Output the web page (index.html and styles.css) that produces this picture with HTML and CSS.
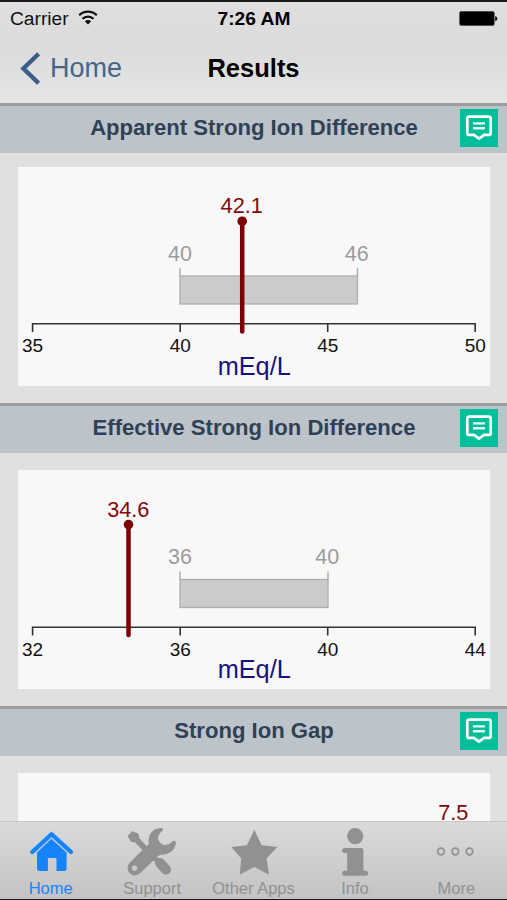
FILE: index.html
```
<!DOCTYPE html>
<html lang="en">
<head>
    <meta charset="UTF-8">
    <meta name="viewport" content="width=device-width, initial-scale=1.0">
    <title>Results</title>
    <link rel="stylesheet" href="styles.css">
</head>
<body>
    <!-- Comment icon shared by the section headers -->
    <svg class="defs" width="0" height="0">
        <symbol id="note" viewBox="0 0 38 38">
            <path d="M9.3 7.7h19.4a2 2 0 0 1 2 2v14.2a2 2 0 0 1-2 2h-4.6L19 29.6l-5.1-3.7H9.3a2 2 0 0 1-2-2V9.7a2 2 0 0 1 2-2z" fill="none" stroke="#fff" stroke-width="2.7" stroke-linejoin="round"/>
            <path d="M13 14.4h12M13 19.2h12" stroke="#e6faf5" stroke-width="2.4"/>
        </symbol>
    </svg>

    <div class="screen">
        <header class="topbar">
            <div class="status">
                <div class="carrier">
                    <span>Carrier</span>
                    <svg width="20" height="15" viewBox="0 0 20 15" fill="none" stroke="#111" stroke-width="2.3">
                        <path d="M1.2 5.2a12.5 12.5 0 0 1 17.6 0"/>
                        <path d="M4.5 8.8a7.8 7.8 0 0 1 11 0"/>
                        <path d="M6.9 11.4a4.4 4.4 0 0 1 6.2 0L10 14.4z" fill="#111" stroke="none"/>
                    </svg>
                </div>
                <div class="clock">7:26 AM</div>
                <div class="battery">
                    <svg width="39" height="15" viewBox="0 0 39 15">
                        <rect x="0.4" y="0.3" width="35" height="14.4" rx="2" fill="#000" stroke="#666" stroke-width="0.6"/>
                        <path d="M36.2 5q2.2.6 2.2 2.6t-2.2 2.6z" fill="#111"/>
                    </svg>
                </div>
            </div>
            <div class="nav">
                <a class="back" href="#">
                    <svg width="20" height="33" viewBox="0 0 20 33">
                        <path d="M18.6 1.8L3.4 16.5l15.2 14.7" fill="none" stroke="#3b5f88" stroke-width="4.4"/>
                    </svg>
                    <span>Home</span>
                </a>
                <h1>Results</h1>
            </div>
        </header>

        <main class="content">
            <section class="result first">
                <div class="result-title">
                    <h2>Apparent Strong Ion Difference</h2>
                    <button class="note"><svg width="38" height="38"><use href="#note"/></svg></button>
                </div>
                <svg class="chart" width="472" height="219" viewBox="0 0 472 219">
                    <rect class="range" x="162" y="109" width="177.5" height="28"/>
                    <path class="limit" d="M162 101v8M339.5 101v8"/>
                    <text class="limit-label" x="162" y="94">40</text>
                    <text class="limit-label" x="338.7" y="94">46</text>
                    <path class="axis" d="M14.6 165v-8.3h442.6v8.3M162.2 156.7v8.3M309.7 156.7v8.3"/>
                    <text class="tick" x="14.6" y="185.3">35</text>
                    <text class="tick" x="162.2" y="185.3">40</text>
                    <text class="tick" x="309.7" y="185.3">45</text>
                    <text class="tick" x="457.2" y="185.3">50</text>
                    <text class="unit" x="236.2" y="208">mEq/L</text>
                    <path class="stem" d="M224.2 54v110.5"/>
                    <circle class="dot" cx="224.2" cy="54.2" r="4.8"/>
                    <text class="value" x="223.7" y="46.3">42.1</text>
                </svg>
            </section>

            <section class="result">
                <div class="result-title">
                    <h2>Effective Strong Ion Difference</h2>
                    <button class="note"><svg width="38" height="38"><use href="#note"/></svg></button>
                </div>
                <svg class="chart" width="472" height="219" viewBox="0 0 472 219">
                    <rect class="range" x="162" y="109.5" width="148" height="28"/>
                    <path class="limit" d="M162 101.5v8M310 101.5v8"/>
                    <text class="limit-label" x="162" y="94.3">36</text>
                    <text class="limit-label" x="309.2" y="94.3">40</text>
                    <path class="axis" d="M14.6 165.5v-8.3h442.6v8.3M162.2 157.2v8.3M309.7 157.2v8.3"/>
                    <text class="tick" x="14.6" y="186">32</text>
                    <text class="tick" x="162.2" y="186">36</text>
                    <text class="tick" x="309.7" y="186">40</text>
                    <text class="tick" x="457.2" y="186">44</text>
                    <text class="unit" x="236.2" y="208.4">mEq/L</text>
                    <path class="stem" d="M110.5 54.5v110.5"/>
                    <circle class="dot" cx="110.5" cy="54.6" r="4.8"/>
                    <text class="value" x="110.3" y="46.8">34.6</text>
                </svg>
            </section>

            <section class="result">
                <div class="result-title">
                    <h2>Strong Ion Gap</h2>
                    <button class="note"><svg width="38" height="38"><use href="#note"/></svg></button>
                </div>
                <svg class="chart" width="472" height="219" viewBox="0 0 472 219">
                    <path class="stem" d="M435.5 54.5v110.5"/>
                    <circle class="dot" cx="435.5" cy="54.6" r="4.8"/>
                    <text class="value" x="435.3" y="47">7.5</text>
                </svg>
            </section>
        </main>

        <nav class="tabs">
            <a class="tab active" href="#">
                <svg width="50" height="50" viewBox="0 0 50 50">
                    <path d="M11 24.5L25.3 10.8l15.3 13.7v16.2a2.4 2.4 0 0 1-2.4 2.4H30.5V31.2a1.2 1.2 0 0 0-1.2-1.2h-6.2a1.2 1.2 0 0 0-1.2 1.2v11.9h-8.5a2.4 2.4 0 0 1-2.4-2.4z" fill="currentColor"/>
                    <path d="M6.3 24.2L25.5 6.6l19.5 17.6" fill="none" stroke="#b4cdec" stroke-width="5.6"/>
                    <path d="M6.3 24L25.5 6.3l19.500 17.7" fill="none" stroke="currentColor" stroke-width="4.2" stroke-linecap="round" stroke-linejoin="round"/>
                </svg>
                <span>Home</span>
            </a>
            <a class="tab" href="#">
                <svg width="50" height="50" viewBox="0 0 50 50">
                    <!-- screwdriver -->
                    <path d="M1.8 8.3l3.8-4 5 2.2.8 4.3L24.5 25l-2.6 2.5L8.8 13.6l-4.3-.8z" fill="currentColor" stroke="currentColor" stroke-width="2" stroke-linejoin="round"/>
                    <path d="M23 26l10 9" stroke="currentColor" stroke-width="5"/>
                    <path d="M33 35l6 6.500" stroke="currentColor" stroke-width="10" stroke-linecap="round"/>
                    <!-- wrench -->
                    <path fill-rule="evenodd" d="M34.8.1C27-.4 20.5 5.5 21.8 16L15 22.500 2.700 34.800a7.300 7.300 0 0 0 10.400 10.500L29 30Q31 27 34 26.700C42 27 48.500 22 49 14.500Q48.200 11.800 45.300 13.400C40.500 18 36 17.800 33 14.400 29.600 10.500 31 6.500 35 3.300Q37.300 1.200 34.800.1zM7.700 37.600a2.600 2.600 0 1 1 0 5.200 2.600 2.600 0 0 1 0-5.200z" fill="currentColor"/>
                </svg>
                <span>Support</span>
            </a>
            <a class="tab" href="#">
                <svg width="50" height="50" viewBox="0 0 50 50">
                    <path d="M25.3 1.8l7.400 15.500 15.800 1.600-11 11.700 2.500 16.200-14.700-7.900-14.600 7.900 1.600-16.200L2.200 18.900l15.800-1.600z" fill="currentColor"/>
                </svg>
                <span>Other Apps</span>
            </a>
            <a class="tab" href="#">
                <svg width="50" height="50" viewBox="0 0 50 50">
                    <circle cx="25.2" cy="8.2" r="8.1" fill="currentColor"/>
                    <path d="M14.5 20h16.6a2.3 2.3 0 0 1 2.3 2.3v20.5h2.2a2.5 2.5 0 0 1 0 5H14.5a2.5 2.5 0 0 1 0-5h2.7V25h-2.7a2.5 2.5 0 0 1 0-5z" fill="currentColor"/>
                </svg>
                <span>Info</span>
            </a>
            <a class="tab" href="#">
                <svg width="50" height="50" viewBox="0 0 50 50" fill="none" stroke="currentColor" stroke-width="1.7">
                    <circle cx="10" cy="23.5" r="3.3"/>
                    <circle cx="24.3" cy="23.5" r="3.3"/>
                    <circle cx="38.5" cy="23.5" r="3.3"/>
                </svg>
                <span>More</span>
            </a>
        </nav>
    </div>
</body>
</html>
```
FILE: styles.css
```
* {
    box-sizing: border-box;
}
body {
    margin: 0;
    font-family: "Liberation Sans", Arial, sans-serif;
    background-color: #e0e0e0;
}
.defs {
    display: none;
}
a {
    text-decoration: none;
}
.screen {
    display: flex;
    flex-direction: column;
    height: 900px;
    border-top: 2px solid #1b1b1d;
    border-bottom: 1px solid #1b1b1d;
    overflow: hidden;
}

/* Top bar */
.topbar {
    height: 101px;
    flex: none;
    background: linear-gradient(#dedede, #dcdcdc 50%, #e4e5e5);
}
.status {
    display: grid;
    grid-template-columns: 1fr auto 1fr;
    align-items: center;
    height: 33px;
    padding: 0 9px 0 10px;
    font-size: 19.2px;
    color: #111;
}
.carrier {
    display: flex;
    align-items: center;
    gap: 9px;
}
.carrier svg {
    margin-top: -3px;
}
.clock {
    font-weight: bold;
    color: #000;
}
.battery {
    display: flex;
    justify-content: flex-end;
}
.nav {
    display: grid;
    grid-template-columns: 1fr auto 1fr;
    align-items: center;
    height: 66px;
    padding: 0 20px;
}
.back {
    display: flex;
    align-items: center;
    gap: 10px;
    font-size: 27px;
    color: #466488;
}
h1 {
    margin: 0;
    font-size: 25.5px;
    color: #000;
}

/* Results */
.content {
    flex: 1;
    min-height: 0;
    overflow: hidden;
}
.result {
    height: 303px;
}
.result.first {
    height: 300px;
}
.result-title {
    display: grid;
    grid-template-columns: 38px 1fr 38px;
    align-items: center;
    height: 50px;
    padding: 0 9px 3px 10px;
    border-top: 3px solid #9b9d9f;
    background-color: #bcc3c9;
}
h2 {
    grid-column: 2;
    margin: 0;
    font-size: 22.1px;
    line-height: 26px;
    text-align: center;
    white-space: nowrap;
    color: #2f4156;
}
.note {
    width: 38px;
    height: 38px;
    padding: 0;
    border: none;
    background-color: #03be9b;
}
.note svg {
    display: block;
}
.chart {
    display: block;
    margin: 17px 17px 0 18px;
    background-color: #f8f8f8;
    text-anchor: middle;
}
.first .chart {
    margin-top: 14px;
}
.range {
    fill: #cbcbcb;
    stroke: #aeaeae;
    stroke-width: 1.3;
}
.limit {
    stroke: #aeaeae;
    stroke-width: 1.5;
}
.limit-label {
    font-size: 21.5px;
    fill: #9c9c9c;
}
.axis {
    fill: none;
    stroke: #333;
    stroke-width: 1.6;
}
.tick {
    font-size: 19px;
    fill: #111;
}
.unit {
    font-size: 25.3px;
    fill: #17127b;
}
.stem {
    stroke: #7d0006;
    stroke-width: 4.5;
    stroke-linecap: round;
}
.dot {
    fill: #7d0006;
}
.value {
    font-size: 21.7px;
    fill: #85080c;
}

/* Tab bar */
.tabs {
    display: flex;
    flex: none;
    height: 78px;
    border-top: 1px solid #c8c8c8;
    background: linear-gradient(#dadada, #c3c3c3);
}
.tab {
    display: flex;
    flex: 1;
    flex-direction: column;
    align-items: center;
    padding-top: 6px;
    font-size: 16.5px;
    line-height: 20px;
    color: #919191;
}
.tab svg {
    display: block;
}
.tab.active {
    color: #1683fb;
}
```
